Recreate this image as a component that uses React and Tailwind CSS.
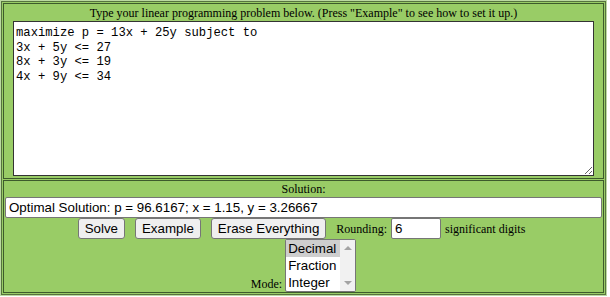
import React from "react";

const serif = "font-['Liberation_Serif','Times_New_Roman',serif]";
const sans = "font-['Liberation_Sans',Arial,sans-serif]";

const Btn = ({ children }) => (
  <button
    className={`${sans} h-[21px] px-[6px] text-[13.333px] leading-none text-black bg-[#efefef] border border-[#767676] rounded-[3px]`}
  >
    {children}
  </button>
);

const App = () => {
  const problem =
    "maximize p = 13x + 25y subject to\n3x + 5y <= 27\n8x + 3y <= 19\n4x + 9y <= 34";

  return (
    <div className={`w-[610px] h-[297px] bg-white ${serif}`}>
      <div className="w-[607px] h-[296px] border border-[#bcd9a2]">
        <div className="h-full border border-[#56733f] bg-[#99cc66] p-[1px] flex flex-col gap-[1px]">
          {/* Problem input */}
          <div className="h-[176px] border border-[#3d5a2c] flex flex-col items-center">
            <div className="pt-[2px] text-[12px] leading-[15px] text-black">
              Type your linear programming problem below. (Press "Example" to see how to set it up.)
            </div>
            <textarea
              defaultValue={problem}
              spellCheck={false}
              className="w-[581px] h-[155px] bg-white border border-[#333] px-[2px] pt-[4px] pb-[2px] font-['Liberation_Mono','Courier_New',monospace] text-[12.2px] leading-[14.7px] text-black outline-none resize"
            />
          </div>

          {/* Solution */}
          <div className="flex-1 border border-[#3d5a2c] flex flex-col items-center">
            <div className="pt-[1px] text-[12px] leading-[14px] text-black">Solution:</div>
            <input
              readOnly
              value="Optimal Solution: p = 96.6167; x = 1.15, y = 3.26667"
              className={`${sans} mt-[1px] w-[597px] h-[21px] px-[3px] bg-white border border-[#767676] rounded-[2px] text-[13.333px] text-black outline-none`}
            />
            <div className="flex items-center pr-[4px] text-[12px] text-black">
              <Btn>Solve</Btn>
              <span className="w-[10px]" />
              <Btn>Example</Btn>
              <span className="w-[10px]" />
              <Btn>Erase Everything</Btn>
              <span className="ml-[10px]">Rounding:</span>
              <input
                readOnly
                value="6"
                className={`${sans} ml-[4px] w-[50px] h-[21px] px-[3px] bg-white border border-[#767676] rounded-[2px] text-[13.333px] text-black outline-none`}
              />
              <span className="ml-[4px]">significant digits</span>
            </div>
            <div className="flex items-end">
              <span className="text-[12px] leading-[14px] mb-[1px] mr-[3px] text-black">Mode:</span>
              <div className="w-[71px] h-[53px] border border-[#767676] rounded-[2px] bg-white flex overflow-hidden">
                <div className={`${sans} flex-1 text-[13.333px] leading-[17px] text-black`}>
                  <div className="bg-[#cecece] pl-[2px]">Decimal</div>
                  <div className="pl-[2px]">Fraction</div>
                  <div className="pl-[2px]">Integer</div>
                </div>
                <div className="w-[15px] bg-[#f1f1f1] flex flex-col justify-between items-center py-[5px]">
                  <svg width="8" height="5" viewBox="0 0 8 5">
                    <path d="M0 5 L4 1 L8 5 Z" fill="#a3a3a3" />
                  </svg>
                  <svg width="8" height="5" viewBox="0 0 8 5">
                    <path d="M0 0 L4 4 L8 0 Z" fill="#a3a3a3" />
                  </svg>
                </div>
              </div>
            </div>
          </div>
        </div>
      </div>
    </div>
  );
};

export default App;
